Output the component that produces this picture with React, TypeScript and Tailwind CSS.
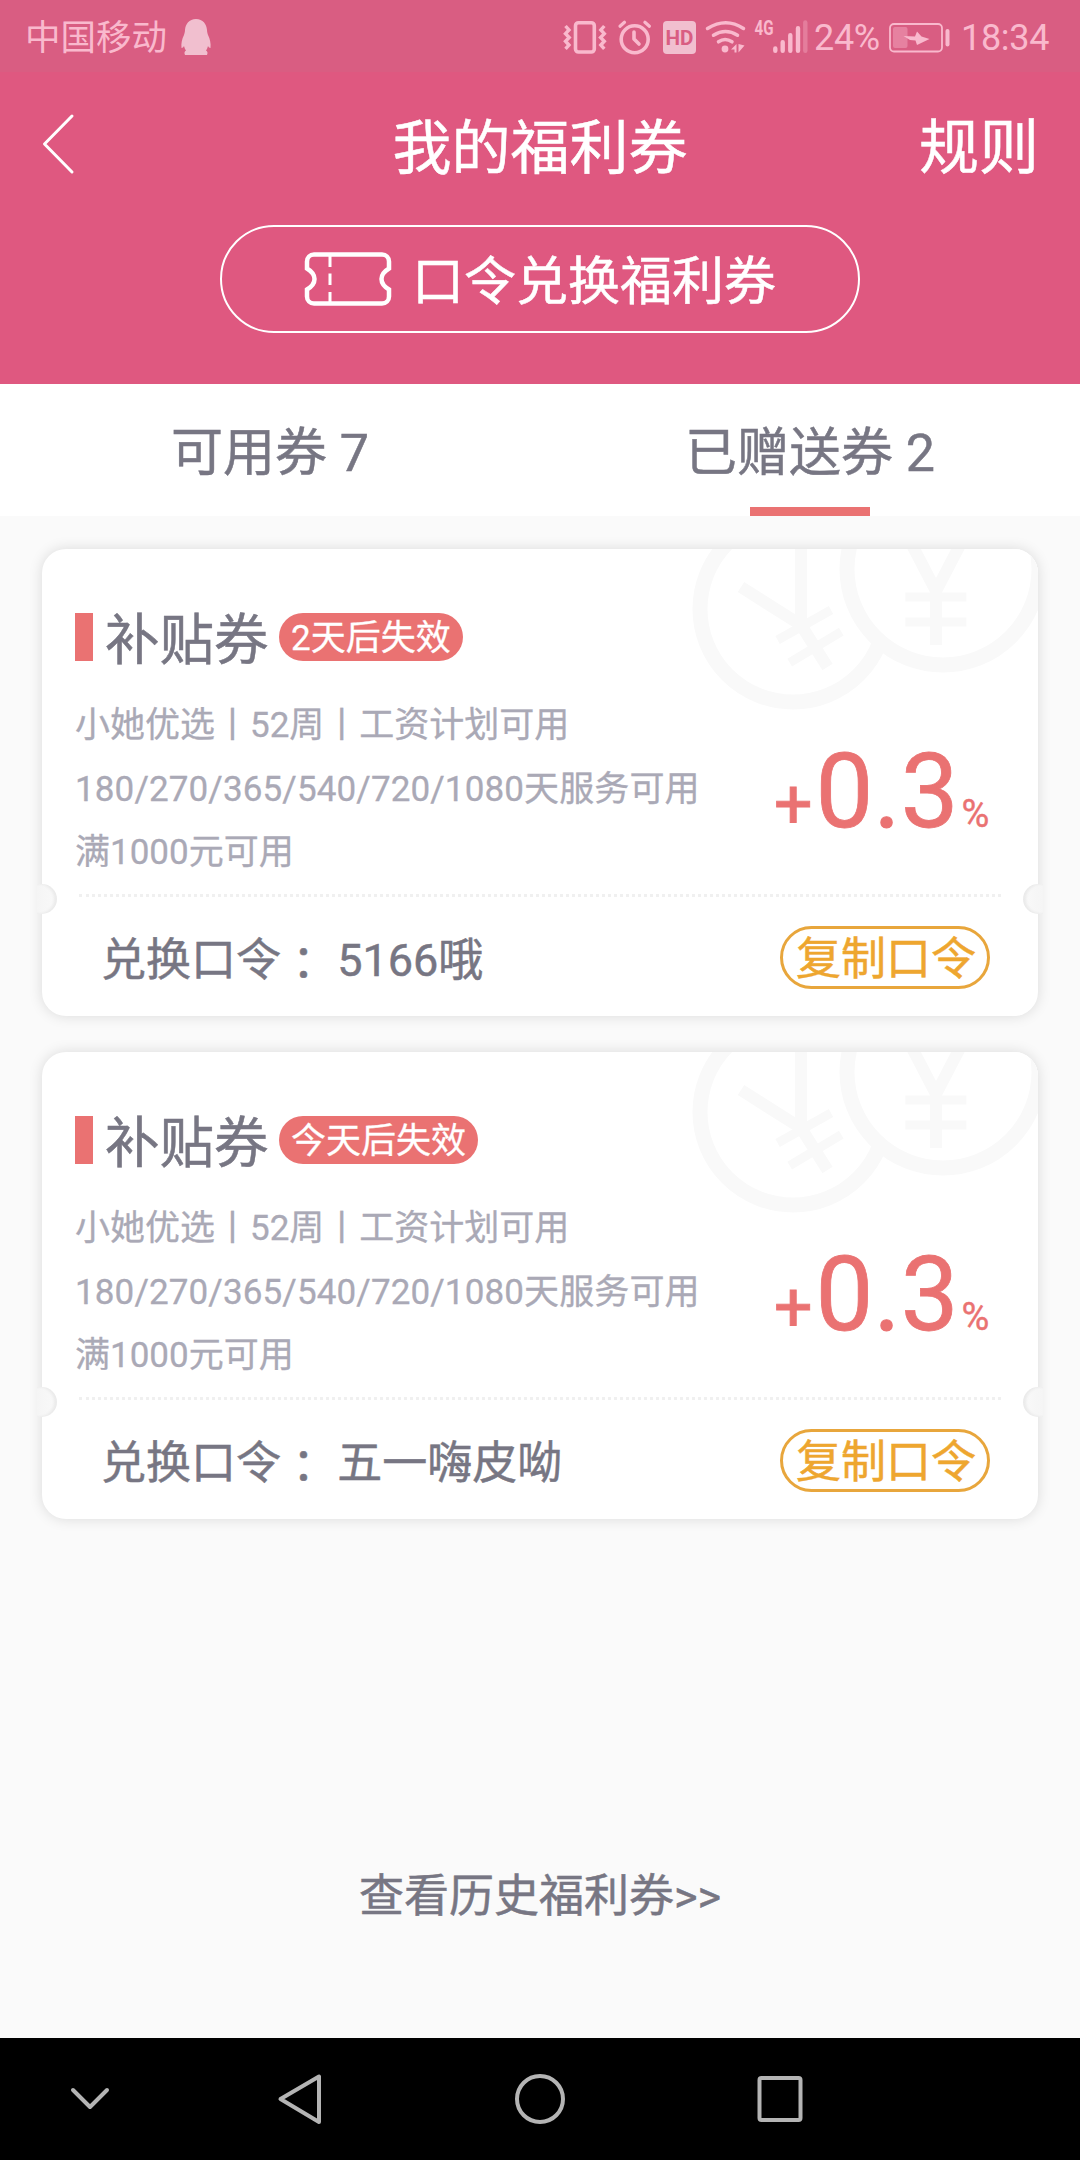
import { clsx } from "clsx";

interface Coupon {
  id: number;
  title: string;
  expires: string;
  lines: string[];
  rate: string;
  code: string;
}

const coupons: Coupon[] = [
  {
    id: 1,
    title: "补贴券",
    expires: "2天后失效",
    lines: ["小她优选丨52周丨工资计划可用", "180/270/365/540/720/1080天服务可用", "满1000元可用"],
    rate: "0.3",
    code: "5166哦",
  },
  {
    id: 2,
    title: "补贴券",
    expires: "今天后失效",
    lines: ["小她优选丨52周丨工资计划可用", "180/270/365/540/720/1080天服务可用", "满1000元可用"],
    rate: "0.3",
    code: "五一嗨皮呦",
  },
];

const tabs = [
  { label: "可用券", count: 7, active: false },
  { label: "已赠送券", count: 2, active: true },
];

function StatusIcons() {
  return (
    <svg width="260" height="54" viewBox="0 0 260 54" fill="none" stroke="currentColor" className="shrink-0">
      {/* vibrate */}
      <rect x="20.500" y="11.700" width="18.800" height="29.300" rx="3" strokeWidth="3.600" />
      <path d="M10.500 15l3.500 4-3.500 3.700 3.700 3.800-3.700 3.700 3.500 3.800-3.500 3.800M49.300 15l-3.500 4 3.500 3.700-3.700 3.800 3.700 3.700-3.500 3.800 3.500 3.800" strokeWidth="3.400" />
      {/* alarm */}
      <circle cx="79.700" cy="28.300" r="13.500" strokeWidth="3.600" />
      <path d="M79 21v7l5 5" strokeWidth="3.600" strokeLinecap="round" strokeLinejoin="round" />
      <path d="M65 15.300l4.500-4M94.400 15.300l-4.500-4" strokeWidth="3.200" strokeLinecap="round" />
      {/* hd */}
      <rect x="108" y="10" width="33" height="33" rx="4" fill="#f1bfcf" stroke="none" />
      <text x="124.500" y="34" textAnchor="middle" textLength="28" lengthAdjust="spacingAndGlyphs" stroke="none" className="fill-[#d95d82] font-[Roboto] text-[20.5px] font-bold">HD</text>
      {/* wifi */}
      <path d="M152.500 17.500q18.500-11.500 36 0M158.500 24.200q12-7.500 24 0M163.500 30.800q6.500-4.500 13.500 0" strokeWidth="3.500" strokeLinecap="round" />
      <circle cx="170" cy="38" r="3.400" fill="currentColor" stroke="none" />
      <path d="M176 38.500l5.500-5.500v8.500h-2v-3zM183.500 41.500v-8.500l6 1.500z" fill="currentColor" stroke="none" />
      {/* signal */}
      <text x="199.500" y="24" textLength="19" lengthAdjust="spacingAndGlyphs" stroke="none" className="fill-current font-[Roboto] text-[19.5px] font-bold">4G</text>
      <path d="M220.300 37.500v2.200M227.700 31.200v8.500M235.300 24.200v15.500M243 17.200v22.500" strokeWidth="4.400" strokeLinecap="round" />
      <path d="M250.300 11.500v28.200" strokeWidth="4.400" strokeLinecap="round" opacity="0.35" />
    </svg>
  );
}

function Battery() {
  return (
    <svg width="62" height="30" viewBox="0 0 62 30" fill="none" stroke="currentColor" className="shrink-0">
      <rect x="1" y="1" width="52" height="27.500" rx="4" strokeWidth="1.800" />
      <rect x="4" y="4" width="14.500" height="21" rx="2" fill="currentColor" stroke="none" opacity="0.4" />
      <path d="M14.500 13l11.500.500 2-5 4.500 5 8 2.500-12.500 6-1.500-4.500-5.500-.500z" fill="currentColor" stroke="none" />
      <path d="M58.500 8v13.500" strokeWidth="4" strokeLinecap="round" />
    </svg>
  );
}

function Coins() {
  return (
    <svg width="348" height="164" viewBox="0 0 348 164" fill="none" className="absolute top-0 right-0 stroke-[#f9f9f9]">
      <circle cx="103" cy="60" r="93" strokeWidth="15" />
      <circle cx="253" cy="20" r="96" strokeWidth="15" className="fill-white" />
      <g strokeWidth="12">
        <path d="M111-4v80L137.500 118M111 76L51 38" />
        <path d="M87.600 91L141 61M99.700 113.700L151.300 82.700" strokeWidth="9" />
        <path d="M221-6l25 48 25-48M246 40v56" />
        <path d="M215.400 48h61M215.400 73h61" strokeWidth="9" />
      </g>
    </svg>
  );
}

function CouponCard({ coupon }: { coupon: Coupon }) {
  return (
    <div className="relative h-[467px] rounded-[24px] bg-white shadow-[0_0_14px_rgba(0,0,0,0.13)]">
      <div className="absolute inset-0 overflow-hidden rounded-[24px]">
        <Coins />
      </div>
      {/* side notches */}
      <div className="absolute top-[335px] -left-[5px] h-[30px] w-5 rounded-r-[15px] bg-linear-to-r from-[#f5f5f5] to-[#f9f9f9] shadow-[inset_-3px_0_3px_rgba(0,0,0,0.06)]" />
      <div className="absolute top-[335px] -right-[5px] h-[30px] w-5 rounded-l-[15px] bg-linear-to-l from-[#f5f5f5] to-[#f9f9f9] shadow-[inset_3px_0_3px_rgba(0,0,0,0.06)]" />

      <div className="relative flex h-full flex-col">
        <div className="flex h-28 items-start pt-16 pl-[33px]">
          <span className="h-12 w-[18px] bg-[#ea7272]" />
          <h2 className="ml-3 pt-[3px] text-[54.5px] leading-[48px] text-[#777683] [-webkit-text-stroke:0.5px]">{coupon.title}</h2>
          <span className="ml-[10.5px] h-12 rounded-full bg-[#ea7272] px-3 text-[35px] leading-[51px] text-white [-webkit-text-stroke:0.3px]">{coupon.expires}</span>
        </div>
        <div className="flex h-[233px] pl-[33px] text-[35px] text-[#aaa9b6]">
          <div className="w-[699px] pt-[32px] whitespace-nowrap [-webkit-text-stroke:0.3px]">
            <p className="h-[65px] leading-[65px]">{coupon.lines[0]}</p>
            <p className="h-[63px] leading-[63px] tracking-[0.13px]">{coupon.lines[1]}</p>
            <p className="h-[63px] leading-[63px]">{coupon.lines[2]}</p>
          </div>
          <div className="flex items-baseline gap-[3px] pt-[71px] leading-[120px] text-[#ea7272]">
            <span className="text-[68px] [-webkit-text-stroke:0.8px]">+</span>
            <span className="text-[103px] [-webkit-text-stroke:0.8px]">{coupon.rate}</span>
            <span className="text-[38px] [-webkit-text-stroke:0.4px]">%</span>
          </div>
        </div>
        <div className="mr-[37px] ml-[37px] h-[3px] border-t-[3px] border-dotted border-[#f0f0f0]" />
        <div className="flex h-[119px] items-start justify-between pt-[29px] pr-12 pl-[59px] text-[45px] [-webkit-text-stroke:0.5px]">
          <p className="leading-[62px] text-[#777683]">
            兑换口令<span className="inline-block translate-y-[4px] font-['Noto_Sans_CJK_JP']">：</span> {coupon.code}
          </p>
          <button className="h-[63px] w-[210px] rounded-full border-[3px] border-[#e8a63c] pl-[2px] leading-[62px] text-[#eea62f]">复制口令</button>
        </div>
      </div>
    </div>
  );
}

export default function App() {
  return (
    <div className="flex h-[2160px] w-[1080px] flex-col bg-[#fafafa] font-[Roboto,'Noto_Sans_CJK_SC',sans-serif]">
      <div className="flex h-[72px] items-center bg-[#d95d82] pt-[3px] pl-[25px] text-[35.5px] text-[#f9b9cd]">
        <span className="w-[142px] pt-[2px] whitespace-nowrap">中国移动</span>
        <svg width="30" height="36" viewBox="0 0 30 36" className="mb-[2px] ml-[14px] shrink-0 fill-[#f1bfcf]">
          <path d="M15 0c7 0 10.500 5 11 11 0 2 .500 3 1 5 2 4 3 8 2.500 13-1 0-2-1-2.500-2-.500 2-1 3-2 4.500 1.500 1 2 2 1 4.500H4c-1-2.500-.500-3.500 1-4.500-1-1.500-1.500-2.500-2-4.500-.500 1-1.500 2-2.500 2C0 24 1 20 3 16c.500-2 1-3 1-5C4.500 5 8 0 15 0z" />
        </svg>
        <div className="ml-[344px] flex h-[69px] shrink-0 items-center">
          <StatusIcons />
        </div>
        <span className="-ml-px w-[66px] text-[36px] tracking-[-0.3px]">24%</span>
        <span className="ml-[9px] shrink-0"><Battery /></span>
        <span className="ml-[10px] text-[36px] tracking-[-0.3px]">18:34</span>
      </div>

      <header className="flex h-[312px] flex-col items-center bg-[#df5880] text-white [-webkit-text-stroke:0.5px]">
        <div className="grid h-[153px] w-full grid-cols-3 items-center pr-[41px] pl-[41px]">
          <svg width="34" height="62" viewBox="0 0 34 62" fill="none" stroke="currentColor" strokeWidth="3" strokeLinecap="round" strokeLinejoin="round" className="mb-[9px]">
            <path d="M31 3L3.500 31 31 59" />
          </svg>
          <h1 className="pt-[2px] text-center text-[59px] whitespace-nowrap">我的福利券</h1>
          <span className="text-right text-[60px]">规则</span>
        </div>
        <button className="flex h-[108px] w-[640px] items-center rounded-full border-2 border-white pl-[82px] text-[52px]">
          <svg width="88" height="56" viewBox="0 0 88 56" fill="none" stroke="currentColor" strokeWidth="4.500">
            <path d="M10 3.500h68c4 0 7 3 7 7v7c-10 6-10 15 0 21v7c0 4-3 7-7 7H10c-4 0-7-3-7-7v-7c10-6 10-15 0-21v-7c0-4 3-7 7-7z" />
            <path d="M26 5v11M26 22.500v11.500M26 41v11" strokeWidth="3" />
          </svg>
          <span className="ml-[20px] pt-[7px]">口令兑换福利券</span>
        </button>
      </header>

      <nav className="grid h-[132px] grid-cols-2 bg-white text-[52px] text-[#777683] [-webkit-text-stroke:0.5px]">
        {tabs.map(tab => (
          <div key={tab.label} className="flex flex-col items-center">
            <span className="h-[123px] leading-[140px]">{tab.label} {tab.count}</span>
            <span className={clsx("h-[9px] w-[120px]", tab.active && "bg-[#ea7272]")} />
          </div>
        ))}
      </nav>

      <main className="flex flex-1 flex-col gap-9 px-[42px] pt-[33px]">
        {coupons.map(coupon => (
          <CouponCard key={coupon.id} coupon={coupon} />
        ))}
        <a className="mt-auto mb-[107px] text-center text-[45px] leading-[68px] text-[#777683] [-webkit-text-stroke:0.5px]">查看历史福利券&gt;&gt;</a>
      </main>

      <footer className="flex h-[122px] items-center bg-black text-[#b4b4b4]">
        <svg width="1080" height="122" viewBox="0 0 1080 122" fill="none" stroke="currentColor" strokeWidth="4" strokeLinecap="round" strokeLinejoin="round">
          <path d="M73 52l17 17 17-17" />
          <path d="M319 38.500v45.500L280.500 61z" />
          <circle cx="540" cy="61" r="23" />
          <rect x="759.500" y="40" width="41" height="42" rx="2" />
        </svg>
      </footer>
    </div>
  );
}
